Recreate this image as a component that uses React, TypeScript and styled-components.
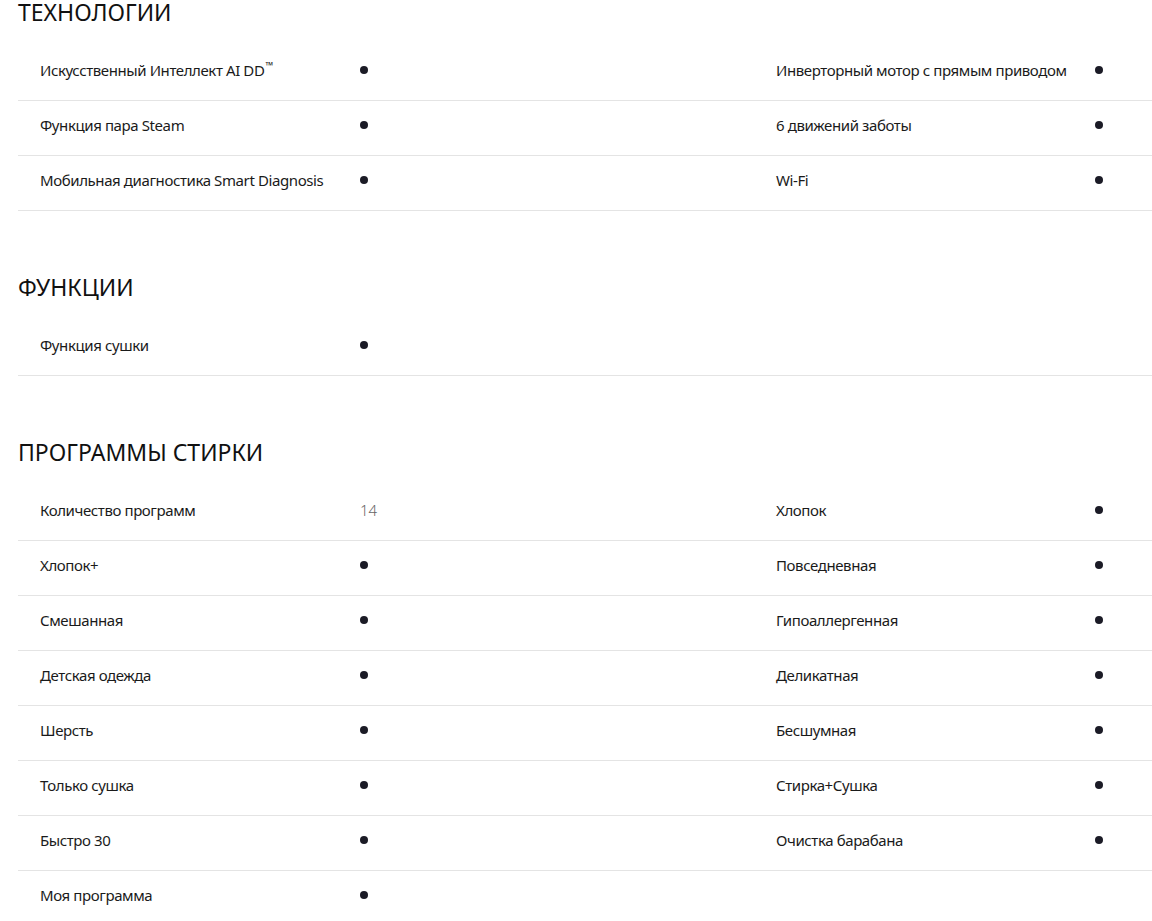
import React from "react";
import styled, { createGlobalStyle } from "styled-components";

type Spec = { label: React.ReactNode; value?: string };

interface SectionProps {
	title: string;
	items: Spec[];
}

const Tm = styled.sup`
	font-size: 10px;
	line-height: 0;
	vertical-align: 7px;
	margin-left: 1px;
`;

const technologies: Spec[] = [
	{ label: <>Искусственный Интеллект AI DD<Tm>™</Tm></> },
	{ label: "Инверторный мотор с прямым приводом" },
	{ label: "Функция пара Steam" },
	{ label: "6 движений заботы" },
	{ label: "Мобильная диагностика Smart Diagnosis" },
	{ label: "Wi-Fi" },
];

const functions: Spec[] = [{ label: "Функция сушки" }];

const programs: Spec[] = [
	{ label: "Количество программ", value: "14" },
	{ label: "Хлопок" },
	{ label: "Хлопок+" },
	{ label: "Повседневная" },
	{ label: "Смешанная" },
	{ label: "Гипоаллергенная" },
	{ label: "Детская одежда" },
	{ label: "Деликатная" },
	{ label: "Шерсть" },
	{ label: "Бесшумная" },
	{ label: "Только сушка" },
	{ label: "Стирка+Сушка" },
	{ label: "Быстро 30" },
	{ label: "Очистка барабана" },
	{ label: "Моя программа" },
];

// split a flat list into rows of two specs
const pairs = (items: Spec[]) => {
	const rows: Spec[][] = [];
	for (let i = 0; i < items.length; i += 2) rows.push(items.slice(i, i + 2));
	return rows;
};

const SpecSection: React.FC<SectionProps> = ({ title, items }) => {
	return (
		<Section>
			<Heading>{title}</Heading>
			{pairs(items).map((row, index) => (
				<Row key={index}>
					{row.map((spec, i) => (
						<React.Fragment key={i}>
							<Label>{spec.label}</Label>
							<Value>{spec.value ? spec.value : <Dot />}</Value>
						</React.Fragment>
					))}
				</Row>
			))}
		</Section>
	);
};

const App: React.FC = () => {
	return (
		<>
			<GlobalStyle />
			<Page>
				<SpecSection title="ТЕХНОЛОГИИ" items={technologies} />
				<SpecSection title="ФУНКЦИИ" items={functions} />
				<SpecSection title="ПРОГРАММЫ СТИРКИ" items={programs} />
			</Page>
		</>
	);
};

export default App;

const GlobalStyle = createGlobalStyle`
	body {
		margin: 0;
		background: #ffffff;
		font-family: "Noto Sans", "Open Sans", Arial, sans-serif;
		color: #111111;
		overflow: hidden;
	}
`;

const Page = styled.div`
	margin: 0;
	padding: 0 0 0 18px;
	box-sizing: border-box;
	width: 100%;
	display: flex;
	flex-direction: column;
	gap: 64px;
`;

const Section = styled.section`
	margin: 0;
	padding: 0;
	display: flex;
	flex-direction: column;
`;

const Heading = styled.h2`
	margin: 0 0 22px 0;
	padding: 0;
	font-size: 23px;
	line-height: 24px;
	font-weight: 400;
	color: #111111;
`;

const Row = styled.div`
	margin: 0;
	padding: 0 0 6px 22px;
	box-sizing: border-box;
	height: 55px;
	display: grid;
	grid-template-columns: 320px 416px 319px 1fr;
	align-items: center;
	border-bottom: 1px solid #e4e4e4;
`;

const Label = styled.div`
	font-size: 15px;
	line-height: 20px;
	color: #1a1a1a;
	letter-spacing: -0.4px;
	white-space: nowrap;
`;

const Value = styled.div`
	display: flex;
	align-items: center;
	font-size: 15px;
	line-height: 20px;
	font-weight: 300;
	color: #666666;
`;

const Dot = styled.span`
	display: inline-block;
	width: 8px;
	height: 8px;
	border-radius: 50%;
	background: #1b1b26;
`;
